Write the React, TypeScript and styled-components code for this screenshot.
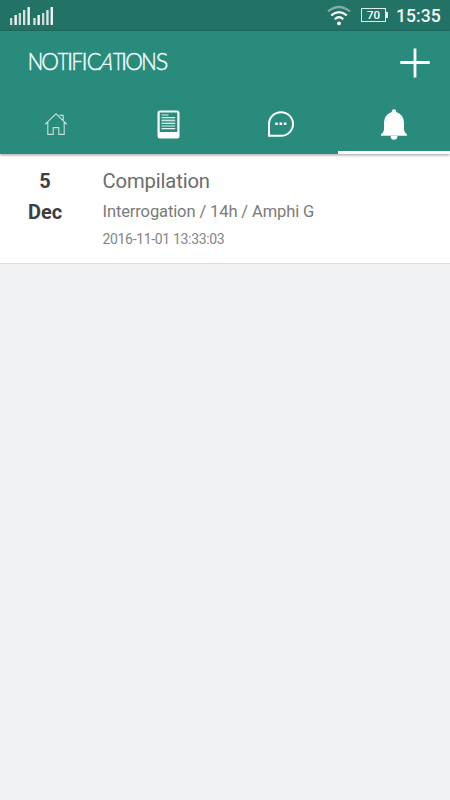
import React from "react";
import styled, { createGlobalStyle } from "styled-components";

const GlobalStyle = createGlobalStyle`
  * { box-sizing: border-box; }
  body { margin: 0; background: #f0f2f4; font-family: Roboto, sans-serif; }
`;

const Screen = styled.main`
  width: 450px;
  height: 800px;
  display: flex;
  flex-direction: column;
  overflow: hidden;
  background: #f0f2f4;
`;

const StatusBar = styled.div`
  height: 31px;
  flex: none;
  display: flex;
  align-items: center;
  justify-content: space-between;
  padding: 0 9.5px 0 10px;
  background: #227266;
`;

const StatusGroup = styled.div`
  display: flex;
  align-items: center;
`;

const Battery = styled.div`
  position: relative;
  width: 25px;
  height: 14px;
  margin: 0 10px 2px 10px;
  border: 1.5px solid #e4efed;
  color: #fff;
  font: 500 11.5px/13px Roboto, sans-serif;
  text-align: center;

  &::after {
    content: "";
    position: absolute;
    right: -3px;
    top: 3px;
    width: 2px;
    height: 6px;
    background: #e4efed;
  }
`;

const Clock = styled.span`
  width: 44.5px;
  color: #f4f9f8;
  font: 500 17.6px/31px Roboto, sans-serif;
  white-space: nowrap;
  padding-top: 2px;
`;

const Header = styled.header`
  position: relative;
  flex: none;
  height: 123px;
  background: #298b7c;
  box-shadow: 0 1px 3px rgba(0, 0, 0, 0.4);
`;

const TitleBar = styled.div`
  height: 64px;
  display: flex;
  align-items: center;
  justify-content: space-between;
  padding: 0 20px 0 29px;
`;

const Title = styled.h1`
  margin: 0 0 4px;
  display: flex;
  color: #f2faf8;
  font: 300 23.5px/30px Lato, sans-serif;
  -webkit-text-stroke: 0.5px #f2faf8;
`;

const Letter = styled.span<{ $width: number; $stretch?: number; $slant?: boolean }>`
  display: flex;
  justify-content: center;
  width: ${(p) => p.$width}px;
  transform: scaleX(${(p) => p.$stretch ?? 1}) skewX(${(p) => (p.$slant ? -18 : 0)}deg);
`;

const Tabs = styled.nav`
  height: 59px;
  display: grid;
  grid-template-columns: repeat(4, 1fr);
`;

const Tab = styled.div<{ $active?: boolean }>`
  display: flex;
  align-items: center;
  justify-content: center;
  padding-top: 2px;
  border-bottom: 3px solid ${(p) => (p.$active ? "#fff" : "transparent")};
`;

const Notification = styled.article`
  flex: none;
  height: 110px;
  display: grid;
  grid-template-columns: 90px 1fr;
  column-gap: 12.5px;
  background: #fff;
  border-bottom: 1px solid #dcdee0;
`;

const DateColumn = styled.div`
  display: flex;
  flex-direction: column;
  align-items: center;
  padding-top: 12px;
  color: #3f3f3f;
  font: 700 20px/30.5px Roboto, sans-serif;
`;

const Details = styled.div`
  padding-top: 12px;
  white-space: nowrap;
`;

const Subject = styled.div`
  color: #6c6c6c;
  font-size: 20.2px;
  letter-spacing: -0.12px;
  line-height: 31px;
`;

const Description = styled.div`
  color: #7a7a7a;
  font-size: 16.5px;
  letter-spacing: -0.11px;
  line-height: 30px;
`;

const Timestamp = styled.div`
  color: #858585;
  font-size: 14px;
  letter-spacing: -0.33px;
  line-height: 24px;
`;

const titleLetters: { char: string; width: number; stretch?: number; slant?: boolean }[] = [
  { char: "N", width: 13, stretch: 0.87 },
  { char: "O", width: 16, stretch: 0.95 },
  { char: "T", width: 10, stretch: 0.78 },
  { char: "I", width: 4 },
  { char: "F", width: 10.5, stretch: 0.85 },
  { char: "I", width: 4 },
  { char: "C", width: 14, stretch: 0.92 },
  { char: "A", width: 13, stretch: 0.85, slant: true },
  { char: "T", width: 8.5, stretch: 0.78 },
  { char: "I", width: 4 },
  { char: "O", width: 16, stretch: 0.95 },
  { char: "N", width: 14, stretch: 0.87 },
  { char: "S", width: 12 },
];

const signalBars = [
  [0, 7, 0.75], [4.5, 10, 1], [8.7, 12, 0.75], [13, 15, 0.8], [17.5, 18, 1],
  [23.3, 7, 0.8], [27.5, 10, 1], [32, 12, 0.75], [36.3, 15, 0.85], [40.6, 18, 1],
];

const SignalIcon = () => (
  <svg width="44" height="18" viewBox="0 0 44 18">
    {signalBars.map(([x, h, o]) => (
      <rect key={x} x={x} y={18 - h} width="2.3" height={h} fill="#fff" opacity={o} />
    ))}
  </svg>
);

const WifiIcon = () => (
  <svg width="24" height="22" viewBox="0 0 24 22" fill="none" strokeWidth="2.2">
    <path d="M1 6.5Q12-2.5 23 6.5" stroke="#7fafa7" />
    <path d="M4.2 10.4Q12 3.8 19.8 10.4M7.7 14.2Q12 10.2 16.3 14.2" stroke="#fff" />
    <circle cx="12" cy="18.4" r="1.9" fill="#fff" />
  </svg>
);

const PlusIcon = () => (
  <svg width="30" height="30" viewBox="0 0 30 30">
    <path d="M15 .5v29M.3 14.5h29.4" stroke="#fff" strokeWidth="2.8" />
  </svg>
);

const HomeIcon = () => (
  <svg width="24" height="24" viewBox="0 0 24 24" fill="none" stroke="#c3ddd8" strokeWidth="1.15">
    <path d="M1 12.3 12 1.8 23 12.3M3.8 10v12.4h5.4v-6.8h5.6v6.8h5.4V10M15.5 3.4h3.7v4.8" />
  </svg>
);

const DocumentIcon = () => (
  <svg width="23" height="29" viewBox="0 0 23 29">
    <rect x=".5" y=".5" width="22" height="28" rx="2.5" fill="#fff" />
    <rect x="2.7" y="2.5" width="17.6" height="19.5" fill="#298b7c" />
    <path d="M4.5 5h7M4.5 7.7h13.7M4.5 13.3h13.7M4.5 16h13.7M4.5 18.7h13.7" stroke="#e6f2ef" strokeWidth="1.2" />
    <path d="M4.5 10.5h13.7" stroke="#c9e2dc" strokeWidth="1.7" />
  </svg>
);

const ChatIcon = () => (
  <svg width="28" height="28" viewBox="0 0 28 28">
    <path d="M2 25.8V14A12 11.8 0 1 1 14 25.8Z" fill="none" stroke="#fff" strokeWidth="2" />
    <path d="M8.2 12.5h2.6v2.6H8.2zM12.5 12.5h2.6v2.6h-2.6zM16.8 12.5h2.6v2.6h-2.6z" fill="#fff" />
  </svg>
);

const BellIcon = () => (
  <svg width="26" height="31" viewBox="0 0 26 31">
    <path
      d="M10.8 3V2.2Q10.8.2 13 .2t2.2 2V3Q23 5.5 23 14v6.5q0 2.8 3 5V27H0v-1.5q3-2.2 3-5V14Q3 5.5 10.8 3Z"
      fill="#fff"
    />
    <path d="M9.5 27h7Q16.3 30.8 13 30.8T9.5 27Z" fill="#fff" />
    <path d="M0 26.2h26v.8H0Z" fill="#b8d8d0" />
  </svg>
);

export default function App() {
  return (
    <>
      <GlobalStyle />
      <Screen>
        <StatusBar>
          <SignalIcon />
          <StatusGroup>
            <WifiIcon />
            <Battery>70</Battery>
            <Clock>15:35</Clock>
          </StatusGroup>
        </StatusBar>
        <Header>
          <TitleBar>
            <Title>
              {titleLetters.map(({ char, width, stretch, slant }, i) => (
                <Letter key={i} $width={width} $stretch={stretch} $slant={slant}>{char}</Letter>
              ))}
            </Title>
            <PlusIcon />
          </TitleBar>
          <Tabs>
            <Tab><HomeIcon /></Tab>
            <Tab><DocumentIcon /></Tab>
            <Tab><ChatIcon /></Tab>
            <Tab $active><BellIcon /></Tab>
          </Tabs>
        </Header>
        <Notification>
          <DateColumn>
            <span>5</span>
            <span>Dec</span>
          </DateColumn>
          <Details>
            <Subject>Compilation</Subject>
            <Description>Interrogation / 14h / Amphi G</Description>
            <Timestamp>2016-11-01 13:33:03</Timestamp>
          </Details>
        </Notification>
      </Screen>
    </>
  );
}
